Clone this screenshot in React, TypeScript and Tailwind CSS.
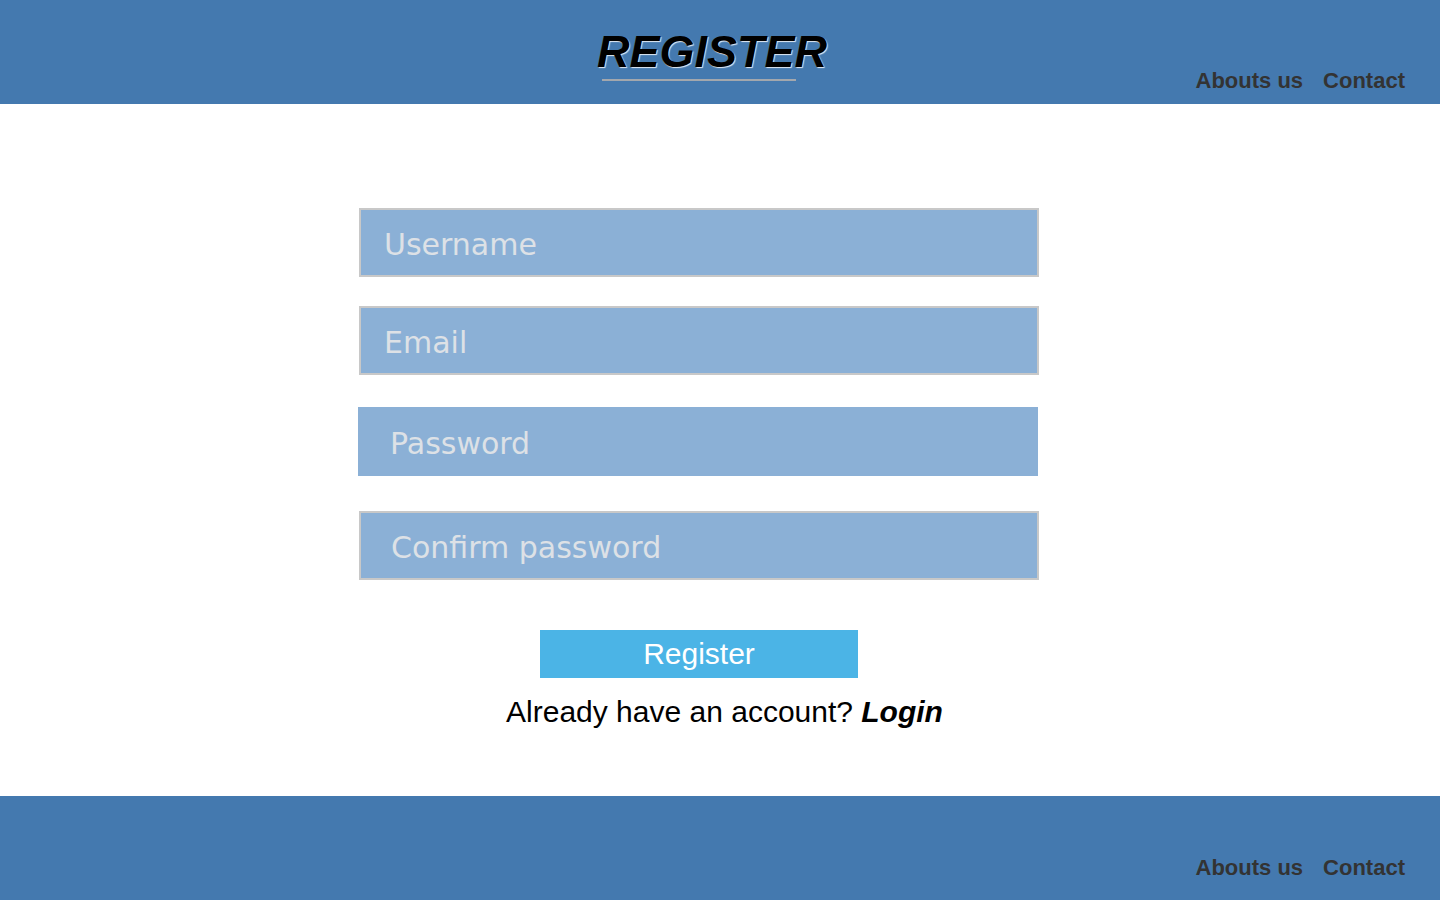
import React from 'react';

const NavLinks = () => (
  <nav className="flex items-end gap-[20px] text-[22px] font-bold leading-[25px] text-[#333333]">
    <a href="#">Abouts us</a>
    <a href="#">Contact</a>
  </nav>
);

export default function App() {
  const fieldBase =
    "h-[69px] w-[680px] bg-[#8bb0d6] pt-[3px] font-['DejaVu_Sans',sans-serif] text-[30px] text-[#eef1f5] outline-none placeholder:text-[#dde1e6]";

  return (
    <div className="flex min-h-[900px] flex-col bg-white font-['Liberation_Sans',Arial,sans-serif]">
      <header className="grid h-[104px] grid-cols-[1fr_240px_1fr] bg-[#4479af]">
        <div />
        <div className="pt-[26px]">
          <h1 className="-ml-[3px] text-[45px] font-bold italic leading-[52px] text-black [text-shadow:1px_1px_1px_rgba(255,255,255,0.85)]">
            REGISTER
          </h1>
          <div className="ml-[2px] mt-[1px] h-[2px] w-[194px] bg-[#a3a7ad]" />
        </div>
        <div className="flex items-end justify-end pb-[11px] pr-[35px]">
          <NavLinks />
        </div>
      </header>

      <main className="flex flex-1 justify-center pr-[42px] pt-[104px]">
        <form className="flex w-[680px] flex-col" onSubmit={(e) => e.preventDefault()}>
          <input
            type="text"
            placeholder="Username"
            className={`${fieldBase} border-2 border-[#c8c8c8] pl-[23px]`}
          />
          <input
            type="email"
            placeholder="Email"
            className={`${fieldBase} mt-[29px] border-2 border-[#c8c8c8] pl-[23px]`}
          />
          <input
            type="password"
            placeholder="Password"
            className={`${fieldBase} -ml-px mt-[32px] pl-[32px]`}
          />
          <input
            type="password"
            placeholder="Confirm password"
            className={`${fieldBase} mt-[35px] border-2 border-[#c8c8c8] pl-[30px]`}
          />
          <button
            type="submit"
            className="mx-auto mt-[50px] h-[48px] w-[318px] bg-[#4bb4e6] text-[30px] leading-[34px] text-white"
          >
            Register
          </button>
          <p className="mt-[17px] pl-[51px] text-center text-[30px] leading-[34px] text-black">
            Already have an account? <a href="#" className="font-bold italic">Login</a>
          </p>
        </form>
      </main>

      <footer className="flex h-[104px] items-end justify-end bg-[#4479af] pb-[20px] pr-[35px]">
        <NavLinks />
      </footer>
    </div>
  );
}
